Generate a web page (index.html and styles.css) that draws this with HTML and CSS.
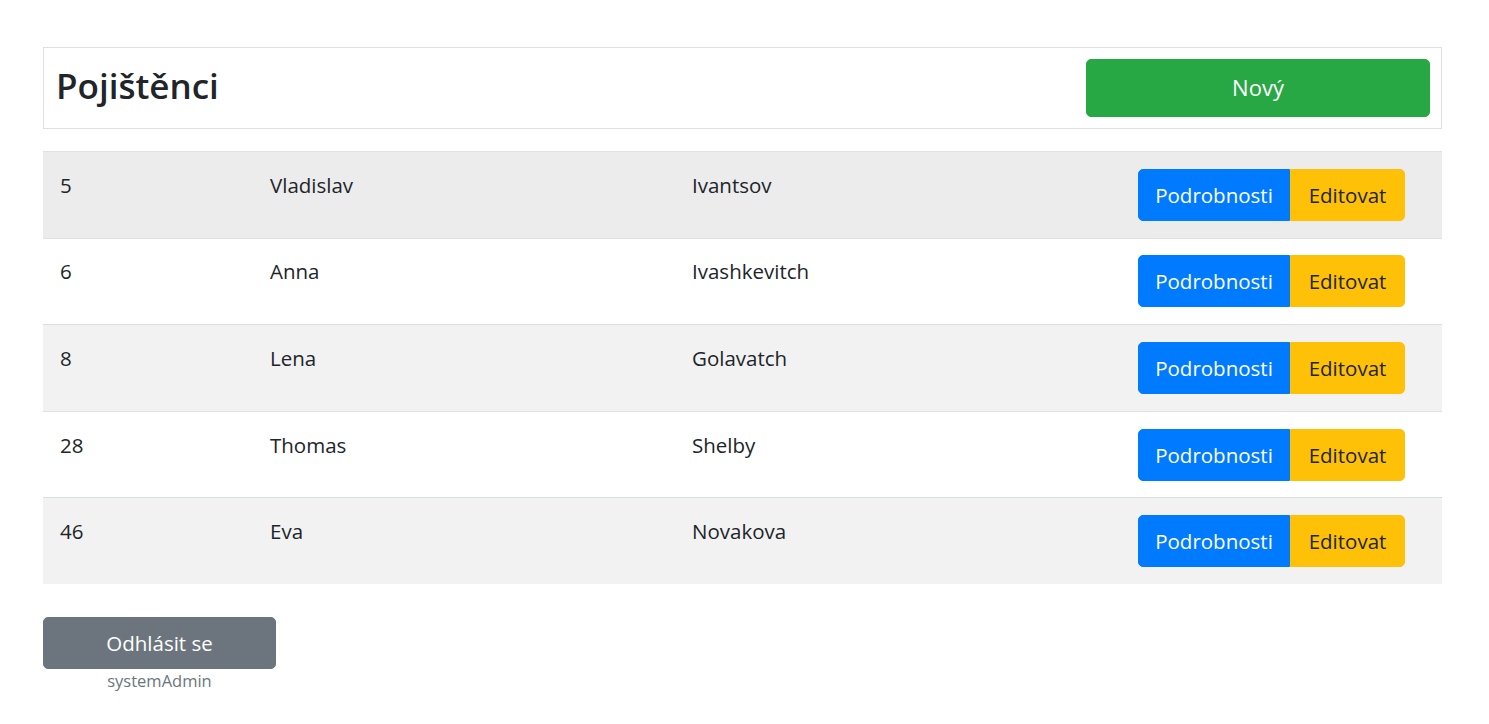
FILE: index.html
```html
<!DOCTYPE html>
<html lang="cs">
<head>
<meta charset="utf-8">
<title>Pojištěnci</title>
<link rel="stylesheet" href="styles.css">
</head>
<body>
<main class="container">
  <header class="page-head">
    <h3 class="page-title">Pojištěnci</h3>
    <button class="btn btn-success btn-new">Nový</button>
  </header>

  <div class="table">
    <div class="row row-hover">
      <div class="cell">5</div>
      <div class="cell">Vladislav</div>
      <div class="cell">Ivantsov</div>
      <div class="cell cell-actions"><div class="btn-group"><button class="btn btn-primary">Podrobnosti</button><button class="btn btn-warning">Editovat</button></div></div>
    </div>
    <div class="row">
      <div class="cell">6</div>
      <div class="cell">Anna</div>
      <div class="cell">Ivashkevitch</div>
      <div class="cell cell-actions"><div class="btn-group"><button class="btn btn-primary">Podrobnosti</button><button class="btn btn-warning">Editovat</button></div></div>
    </div>
    <div class="row row-striped">
      <div class="cell">8</div>
      <div class="cell">Lena</div>
      <div class="cell">Golavatch</div>
      <div class="cell cell-actions"><div class="btn-group"><button class="btn btn-primary">Podrobnosti</button><button class="btn btn-warning">Editovat</button></div></div>
    </div>
    <div class="row">
      <div class="cell">28</div>
      <div class="cell">Thomas</div>
      <div class="cell">Shelby</div>
      <div class="cell cell-actions"><div class="btn-group"><button class="btn btn-primary">Podrobnosti</button><button class="btn btn-warning">Editovat</button></div></div>
    </div>
    <div class="row row-striped">
      <div class="cell">46</div>
      <div class="cell">Eva</div>
      <div class="cell">Novakova</div>
      <div class="cell cell-actions"><div class="btn-group"><button class="btn btn-primary">Podrobnosti</button><button class="btn btn-warning">Editovat</button></div></div>
    </div>
  </div>

  <div class="logout">
    <button class="btn btn-secondary btn-logout">Odhlásit se</button>
    <small class="user">systemAdmin</small>
  </div>
</main>
</body>
</html>
```

FILE: styles.css
```css
* { box-sizing: border-box; }

html, body {
  margin: 0;
  padding: 0;
  background: #ffffff;
}

body {
  font-family: "Open Sans", "Noto Sans", sans-serif;
  font-size: 20.5px;
  line-height: 1.5;
  color: #212529;
}

.container {
  width: 1399px;
  margin: 0 0 0 43px;
  padding-top: 47px;
}

.page-head {
  display: flex;
  align-items: center;
  justify-content: space-between;
  border: 1px solid #dfdfdf;
  padding: 11px 11px 11px 12px;
  height: 82px;
}

.page-title {
  margin: 0 0 5px 0;
  font-size: 35px;
  font-weight: 600;
  line-height: 1.2;
  color: #212529;
}

.btn {
  font-family: inherit;
  border: 1px solid transparent;
  border-radius: 5px;
  cursor: pointer;
  margin: 0;
}

.btn-success {
  background: #28a745;
  border-color: #28a745;
  color: #ffffff;
}

.btn-new {
  width: 344px;
  height: 58px;
  font-size: 22px;
  padding: 0 0 3px 0;
}

.table {
  margin-top: 22px;
  display: flex;
  flex-direction: column;
}

.row {
  display: grid;
  grid-template-columns: 210px 422px 446px 1fr;
  border-top: 1px solid #dee2e6;
}

.row-striped {
  background: #f2f2f2;
  border-top-color: #d8dde2;
}
.row-hover { background: #ececec; }

.cell {
  padding: 16.8px 17px;
  line-height: 33px;
}

.btn-group {
  display: flex;
}

.btn-group .btn {
  height: 52px;
  font-size: 20.5px;
  padding: 0 16px;
}

.btn-group .btn:first-child {
  border-radius: 5px 0 0 5px;
  width: 152px;
}

.btn-group .btn:last-child {
  border-radius: 0 5px 5px 0;
  width: 115px;
}

.btn-primary {
  background: #007bff;
  border-color: #007bff;
  color: #ffffff;
}

.btn-warning {
  background: #ffc107;
  border-color: #ffc107;
  color: #212529;
}

.logout {
  margin-top: 33px;
  width: 233px;
  display: flex;
  flex-direction: column;
  align-items: center;
}

.btn-secondary {
  background: #6c757d;
  border-color: #6c757d;
  color: #ffffff;
}

.btn-logout {
  width: 233px;
  height: 52px;
  font-size: 20.5px;
}

.user {
  font-size: 16.5px;
  color: #6c757d;
  line-height: 1.3;
  margin-top: 1px;
}
```
